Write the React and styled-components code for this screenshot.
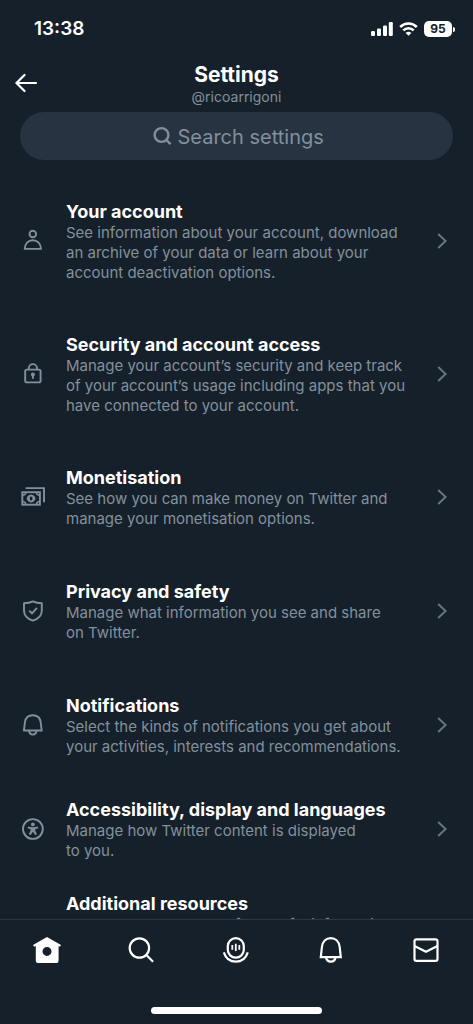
import React from "react";
import styled, { createGlobalStyle, ThemeProvider } from "styled-components";

const theme = {
  background: "#16202a",
  field: "#273340",
  text: "#ffffff",
  muted: "#82909c",
  faint: "#6a7783",
  line: "#2c3742",
};

const GlobalStyle = createGlobalStyle`
  *, *::before, *::after { box-sizing: border-box; }
  body {
    margin: 0;
    background: ${theme.background};
    color: ${theme.text};
    font-family: Inter, "Liberation Sans", sans-serif;
  }
`;

const Screen = styled.div`
  display: flex;
  flex-direction: column;
  height: 100vh;
  background: ${(p) => p.theme.background};
`;

const StatusBar = styled.div`
  display: flex;
  flex: none;
  align-items: center;
  justify-content: space-between;
  height: 58px;
  padding: 0 18px 0 34px;
`;

const Clock = styled.time`
  font-size: 19px;
  font-weight: 600;
  line-height: 24px;
`;

const StatusIcons = styled.div`
  display: flex;
  align-items: center;
  gap: 6px;
`;

const Battery = styled.div`
  display: flex;
  align-items: center;
  gap: 1px;
`;

const BatteryLevel = styled.span`
  width: 28px;
  height: 16px;
  border-radius: 5px;
  background: ${(p) => p.theme.text};
  color: ${(p) => p.theme.background};
  font-size: 12px;
  font-weight: 700;
  line-height: 16px;
  text-align: center;
`;

const BatteryTip = styled.span`
  width: 2px;
  height: 5px;
  border-radius: 0 2px 2px 0;
  background: ${(p) => p.theme.text};
`;

const Header = styled.header`
  display: grid;
  flex: none;
  grid-template-columns: 1fr auto 1fr;
  align-items: center;
  padding: 3px 14px 0;
`;

const BackButton = styled.button`
  display: flex;
  justify-self: start;
  padding: 0;
  border: 0;
  background: none;
  color: ${(p) => p.theme.text};
  cursor: pointer;
`;

const Heading = styled.div`
  text-align: center;
`;

const Title = styled.h1`
  margin: 0;
  font-size: 21px;
  font-weight: 700;
  line-height: 28px;
`;

const Handle = styled.p`
  margin: 0;
  color: ${(p) => p.theme.muted};
  font-size: 14px;
  line-height: 16px;
`;

const SearchField = styled.label`
  display: flex;
  flex: none;
  align-items: center;
  justify-content: center;
  gap: 6px;
  height: 48px;
  margin: 7px 20px 0;
  padding-left: 4px;
  border-radius: 24px;
  background: ${(p) => p.theme.field};
  color: ${(p) => p.theme.muted};
`;

const SearchInput = styled.input`
  width: 148px;
  height: 32px;
  padding: 2px 0 0;
  border: 0;
  outline: 0;
  background: none;
  color: ${(p) => p.theme.text};
  font-family: inherit;
  font-size: 20px;
  appearance: none;

  &::-webkit-search-cancel-button {
    display: none;
  }

  &::placeholder {
    color: ${(p) => p.theme.muted};
    opacity: 1;
  }
`;

const SettingsList = styled.ul`
  flex: 1;
  min-height: 0;
  margin: 0;
  padding: 41px 0 0;
  overflow-y: auto;
  scrollbar-width: none;
  list-style: none;
`;

const Item = styled.li`
  margin-bottom: ${(p) => p.$space}px;
`;

const ItemLink = styled.a`
  display: flex;
  align-items: center;
  gap: 21px;
  padding: 0 26px 0 21px;
  color: ${(p) => p.theme.muted};
  text-decoration: none;
`;

const ItemText = styled.div`
  flex: 1;
  min-width: 0;
`;

const ItemTitle = styled.h2`
  margin: 0;
  color: ${(p) => p.theme.text};
  font-size: 18px;
  font-weight: 700;
  line-height: 22px;
`;

const ItemDescription = styled.p`
  margin: 0;
  font-size: 15px;
  line-height: 20px;
  white-space: pre-line;
`;

const Glyph = styled.svg.attrs({ fill: "none", stroke: "currentColor", "aria-hidden": true })`
  display: block;
  flex: none;
`;

const ItemGlyph = styled(Glyph)`
  margin-bottom: 2px;
`;

const Chevron = styled(ItemGlyph)`
  color: ${(p) => p.theme.faint};
`;

const TabBar = styled.nav`
  display: flex;
  flex: none;
  padding-top: 16px;
  border-top: 1px solid ${(p) => p.theme.line};
`;

const Tab = styled.a`
  display: flex;
  flex: 1;
  justify-content: center;
  color: ${(p) => p.theme.text};
`;

const HomeIndicator = styled.div`
  flex: none;
  width: 36%;
  height: 7px;
  margin: 43px auto 10px;
  border-radius: 4px;
  background: ${(p) => p.theme.text};
`;

const RowGlyph = ({ children }) => (
  <ItemGlyph width="24" height="24" viewBox="0 0 24 24" strokeWidth="1.9">{children}</ItemGlyph>
);

const TabGlyph = ({ children }) => (
  <Glyph width="28" height="28" viewBox="0 0 28 28" strokeWidth="2.2">{children}</Glyph>
);

const PersonIcon = () => (
  <RowGlyph>
    <circle cx="11.8" cy="5" r="3.3" />
    <path d="M3.8 19.9C4 14.6 7 11.2 11.8 11.2S19.7 14.6 19.9 19.9Z" />
  </RowGlyph>
);

const LockIcon = () => (
  <RowGlyph>
    <rect x="4.2" y="7.6" width="15.4" height="12.8" rx="1.6" />
    <path d="M7.8 7.6V6.2a4.1 4.1 0 0 1 8.2 0v1.4" />
    <circle cx="11.9" cy="12.6" r="2" fill="currentColor" stroke="none" />
    <path d="M11.9 12.8v4" />
  </RowGlyph>
);

const MoneyIcon = () => (
  <RowGlyph>
    <path d="M4.6 3.1H23V17.3" />
    <rect x="1.3" y="7.2" width="17.6" height="12.5" />
    <path d="M1.3 10.3C3.3 10.3 4.7 9.2 4.9 7.2M18.9 10.3C16.9 10.3 15.5 9.2 15.3 7.2M1.3 16.6C3.3 16.6 4.7 17.7 4.9 19.7M18.9 16.6C16.9 16.6 15.5 17.7 15.3 19.7" strokeWidth="1.5" />
    <path d="M10.1 9.4C7.6 9.8 6.2 11.300 5.600 13.450C6.200 15.600 7.600 17.100 10.100 17.500C12.600 17.100 14 15.600 14.600 13.450C14 11.300 12.600 9.800 10.100 9.400ZM10.100 11.500C11 11.500 11.400 12.200 11.400 13.450S11 15.400 10.100 15.400S8.800 14.700 8.800 13.450S9.200 11.500 10.100 11.500Z" fill="currentColor" fillRule="evenodd" stroke="none" />
  </RowGlyph>
);

const ShieldIcon = () => (
  <RowGlyph>
    <path d="M11.9 2.4C14.2 3.6 17.3 4.2 20.8 4.2V11.5C20.8 16.8 17.2 20 11.9 21.7C6.6 20 3 16.8 3 11.5V4.2C6.5 4.2 9.6 3.6 11.9 2.4Z" strokeLinejoin="round" />
    <path d="M8.2 11.6L11 14.3L16 8.8" />
  </RowGlyph>
);

const BellIcon = () => (
  <RowGlyph>
    <path d="M2.9 17.5L3.9 9.3C4.5 5 7.6 2.3 11.8 2.3S19.1 5 19.7 9.3L20.7 17.5Z" strokeLinejoin="round" />
    <path d="M8 17.7C8.3 20.2 9.8 21.6 11.8 21.6S15.3 20.2 15.6 17.7" />
  </RowGlyph>
);

const AccessibilityIcon = () => (
  <RowGlyph>
    <circle cx="11.9" cy="12" r="9.9" />
    <circle cx="11.9" cy="7.4" r="1.9" fill="currentColor" stroke="none" />
    <path d="M7 9.5C10 10.4 13.8 10.4 16.8 9.5L17.3 11.2C16.2 11.6 15.2 11.9 14.2 12V13.4L16 17.2L14.2 18L11.9 14.7L9.6 18L7.8 17.2L9.6 13.4V12C8.6 11.9 7.6 11.6 6.5 11.2Z" fill="currentColor" stroke="none" />
  </RowGlyph>
);

const MoreIcon = () => (
  <RowGlyph>
    <circle cx="12" cy="12" r="9.9" />
    <path d="M7 12h2M11 12h2M15 12h2" />
  </RowGlyph>
);

const settings = [
  { title: "Your account", text: "See information about your account, download an archive of your data or learn about your account deactivation options.", Icon: PersonIcon, space: 51 },
  { title: "Security and account access", text: "Manage your account’s security and keep track of your account’s usage including apps that you have connected to your account.", Icon: LockIcon, space: 51 },
  { title: "Monetisation", text: "See how you can make money on Twitter and manage your monetisation options.", Icon: MoneyIcon, space: 52 },
  { title: "Privacy and safety", text: "Manage what information you see and share\non Twitter.", Icon: ShieldIcon, space: 52 },
  { title: "Notifications", text: "Select the kinds of notifications you get about your activities, interests and recommendations.", Icon: BellIcon, space: 42 },
  { title: "Accessibility, display and languages", text: "Manage how Twitter content is displayed\nto you.", Icon: AccessibilityIcon, space: 32 },
  { title: "Additional resources", text: "Check out other places for helpful information\nto learn more about Twitter products and services.", Icon: MoreIcon, space: 32 },
];

const SettingsItem = ({ title, text, Icon, space }) => (
  <Item $space={space}>
    <ItemLink href="#">
      <Icon />
      <ItemText>
        <ItemTitle>{title}</ItemTitle>
        <ItemDescription>{text}</ItemDescription>
      </ItemText>
      <Chevron width="10" height="16" viewBox="0 0 10 16" strokeWidth="1.9">
        <path d="M1.2 1L8.6 8L1.2 15" />
      </Chevron>
    </ItemLink>
  </Item>
);

export default function App() {
  return (
    <ThemeProvider theme={theme}>
      <GlobalStyle />
      <Screen>
        <StatusBar>
          <Clock>13:38</Clock>
          <StatusIcons>
            <Glyph width="22" height="14" viewBox="0 0 22 14">
              <g fill="currentColor" stroke="none">
                <rect x="0" y="9" width="4" height="5" rx="1.2" />
                <rect x="6" y="6.5" width="4" height="7.5" rx="1.2" />
                <rect x="12" y="3.5" width="4" height="10.5" rx="1.2" />
                <rect x="17.8" y="0" width="4" height="14" rx="1.2" />
              </g>
            </Glyph>
            <Glyph width="19" height="14" viewBox="0 0 19 14" strokeWidth="2.6">
              <path d="M1.2 5C5.8 .4 13.2 .4 17.8 5" />
              <path d="M4.3 8.4C7.3 5.5 11.7 5.5 14.7 8.4" />
              <path d="M9.5 13.8L6.6 10.9C8.3 9.4 10.7 9.4 12.4 10.9Z" fill="currentColor" stroke="none" />
            </Glyph>
            <Battery>
              <BatteryLevel>95</BatteryLevel>
              <BatteryTip />
            </Battery>
          </StatusIcons>
        </StatusBar>

        <Header>
          <BackButton type="button" aria-label="Back">
            <Glyph width="24" height="20" viewBox="0 0 24 20" strokeWidth="2.2" strokeLinecap="round">
              <path d="M2.5 10H22M10.5 2L2.5 10L10.5 18" />
            </Glyph>
          </BackButton>
          <Heading>
            <Title>Settings</Title>
            <Handle>@ricoarrigoni</Handle>
          </Heading>
        </Header>

        <SearchField>
          <Glyph width="20" height="20" viewBox="0 0 20 20" strokeWidth="2.4">
            <circle cx="9.5" cy="9" r="6.9" />
            <path d="M14.3 13.9L18.5 18.1" />
          </Glyph>
          <SearchInput type="search" placeholder="Search settings" aria-label="Search settings" />
        </SearchField>

        <SettingsList>
          {settings.map((item) => (
            <SettingsItem key={item.title} {...item} />
          ))}
        </SettingsList>

        <TabBar aria-label="Main">
          <Tab href="#" aria-label="Home">
            <TabGlyph>
              <path d="M14 1L28 8.9L27 10.8L25.6 10V24.8Q25.6 27 23.4 27H5Q2.8 27 2.8 24.8V10L1.2 10.8L0 8.9ZM14 10.9A4.5 4.5 0 1 0 14 19.9A4.5 4.5 0 1 0 14 10.9Z" fill="currentColor" fillRule="evenodd" stroke="none" />
            </TabGlyph>
          </Tab>
          <Tab href="#" aria-label="Search">
            <TabGlyph>
              <circle cx="11.4" cy="12" r="9.7" />
              <path d="M18.2 18.8L25 25.7" />
            </TabGlyph>
          </Tab>
          <Tab href="#" aria-label="Spaces">
            <TabGlyph>
              <rect x="5.8" y="2.1" width="16" height="19.6" rx="8" />
              <path d="M10.3 9v4.8M13.8 7.8v7.2M17.3 9v4.8" strokeWidth="1.8" />
              <path d="M1.8 16.3C3.8 22.4 8.2 25.7 13.8 25.7S23.8 22.4 25.8 16.3" />
            </TabGlyph>
          </Tab>
          <Tab href="#" aria-label="Notifications">
            <TabGlyph>
              <path d="M3.8 21.1L4.9 11C5.5 5.7 9 2.1 13.8 2.1S22.1 5.7 22.7 11L23.8 21.1Z" />
              <path d="M9 21.3C9.5 24.2 11.3 25.7 13.8 25.7S18.1 24.2 18.6 21.3" />
            </TabGlyph>
          </Tab>
          <Tab href="#" aria-label="Messages">
            <TabGlyph>
              <rect x="2.5" y="3.4" width="23" height="21.5" rx="1.8" />
              <path d="M2.5 10L14 15.7L25.5 10" />
            </TabGlyph>
          </Tab>
        </TabBar>
        <HomeIndicator />
      </Screen>
    </ThemeProvider>
  );
}
